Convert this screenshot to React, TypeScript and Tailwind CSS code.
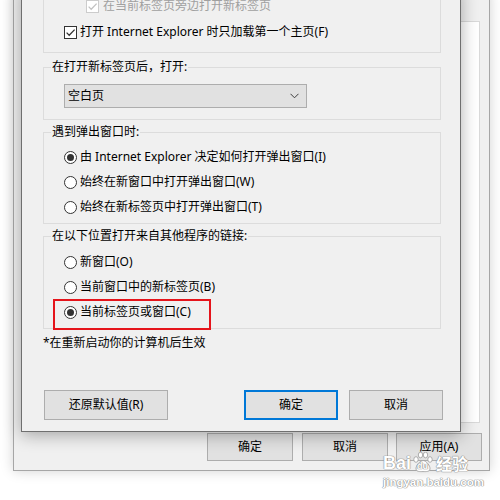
import React from "react";

function CheckBox({ disabled }: { disabled?: boolean }) {
  return (
    <span
      className={`flex h-[13px] w-[13px] shrink-0 items-center justify-center border bg-white ${
        disabled ? "border-[#cccccc]" : "border-[#333333]"
      }`}
    >
      <svg width="11" height="11" viewBox="0 0 11 11">
        <path
          d="M1.6 5.6 L4.2 8.2 L9.6 2.6"
          fill="none"
          stroke={disabled ? "#c2c2c2" : "#333333"}
          strokeWidth="1.3"
        />
      </svg>
    </span>
  );
}

function Radio({ checked }: { checked?: boolean }) {
  return (
    <span className="flex h-[13px] w-[13px] shrink-0 items-center justify-center rounded-full border border-[#333333] bg-white">
      {checked && <span className="h-[7px] w-[7px] rounded-full bg-[#333333]" />}
    </span>
  );
}

function RadioRow({ label, checked }: { label: string; checked?: boolean }) {
  return (
    <div className="flex h-[16px] items-center gap-[3px]">
      <Radio checked={checked} />
      <span>{label}</span>
    </div>
  );
}

function Group({ title, children, className }: { title: string; children: React.ReactNode; className?: string }) {
  return (
    <fieldset className={`border border-[#dcdcdc] pl-[7px] ${className ?? ""}`}>
      <legend className="px-[1px] leading-[16px]">{title}</legend>
      {children}
    </fieldset>
  );
}

function WinButton({ label, w, h, primary }: { label: string; w: string; h: string; primary?: boolean }) {
  return (
    <button
      className={`flex items-center justify-center bg-[#e1e1e1] ${w} ${h} ${
        primary ? "border-2 border-[#0078d7]" : "border border-[#adadad]"
      }`}
    >
      {label}
    </button>
  );
}

export default function App() {
  return (
    <div className="relative h-[500px] w-[500px] overflow-hidden bg-white font-['Noto_Sans','Noto_Sans_CJK_SC',sans-serif] text-[12px] leading-[16px] text-black">
      {/* Internet options window behind */}
      <div className="absolute left-[13px] top-[-10px] flex h-[481px] w-[477px] flex-col border border-[#a6a6a6] bg-[#f0f0f0] shadow-[0_0_12px_rgba(0,0,0,0.18)]">
        <div className="mx-[9px] mt-[30px] ml-[8px] flex-1 border border-[#d9d9d9] bg-white" />
        <div className="flex justify-end pb-[9px] pr-[7px] pt-[10px]">
          <div className="mr-[9px]">
            <WinButton label="确定" w="w-[86px]" h="h-[28px]" />
          </div>
          <div className="mr-[8px]">
            <WinButton label="取消" w="w-[86px]" h="h-[28px]" />
          </div>
          <WinButton label="应用(A)" w="w-[86px]" h="h-[28px]" />
        </div>
      </div>

      {/* Tab settings dialog */}
      <div className="absolute left-[21px] top-[-15px] w-[440px] border border-[#6f6f6f] bg-[#f0f0f0] shadow-[0_3px_16px_rgba(0,0,0,0.32)]">
        <div className="pl-[21px] pr-[19px]">
          <div className="border border-[#dcdcdc] pb-[12px] pl-[20px] pt-[11px]">
            <div className="ml-[22px] flex h-[16px] items-center gap-[4px] text-[#a0a0a0]">
              <CheckBox disabled />
              <span>在当前标签页旁边打开新标签页</span>
            </div>
            <div className="mt-[10px] flex h-[16px] items-center gap-[3px]">
              <CheckBox />
              <span>打开 Internet Explorer 时只加载第一个主页(F)</span>
            </div>
          </div>

          <Group title="在打开新标签页后，打开:" className="mt-[6px] pb-[11px] pt-[9px]">
            <div className="ml-[13px] flex h-[24px] w-[243px] items-center justify-between border border-[#adadad] bg-[#e1e1e1] pl-[3px] pr-[7px]">
              <span>空白页</span>
              <svg width="9" height="6" viewBox="0 0 9 6">
                <path d="M0.5 0.8 L4.5 4.8 L8.5 0.8" fill="none" stroke="#3c3c3c" strokeWidth="1" />
              </svg>
            </div>
          </Group>

          <Group title="遇到弹出窗口时:" className="mt-[4px] pb-[8px] pt-[9px]">
            <div className="ml-[13px] flex flex-col gap-[9px]">
              <RadioRow label="由 Internet Explorer 决定如何打开弹出窗口(I)" checked />
              <RadioRow label="始终在新窗口中打开弹出窗口(W)" />
              <RadioRow label="始终在新标签页中打开弹出窗口(T)" />
            </div>
          </Group>

          <Group title="在以下位置打开来自其他程序的链接:" className="mt-[4px] pb-[8px] pt-[10px]">
            <div className="ml-[13px] flex flex-col gap-[9px]">
              <RadioRow label="新窗口(O)" />
              <RadioRow label="当前窗口中的新标签页(B)" />
              <div className="relative">
                <RadioRow label="当前标签页或窗口(C)" checked />
                <div className="pointer-events-none absolute left-[-11px] top-[-5px] h-[31px] w-[158px] border-2 border-[#e5141b]" />
              </div>
            </div>
          </Group>

          <p className="mt-[6px] h-[16px]">*在重新启动你的计算机后生效</p>
        </div>

        <div className="mt-[39px] flex items-center justify-between pb-[11px] pl-[22px] pr-[17px]">
          <WinButton label="还原默认值(R)" w="w-[124px]" h="h-[30px]" />
          <div className="flex gap-[11px]">
            <WinButton label="确定" w="w-[94px]" h="h-[30px]" primary />
            <WinButton label="取消" w="w-[94px]" h="h-[30px]" />
          </div>
        </div>
      </div>

      {/* watermark */}
      <div className="pointer-events-none absolute left-[383px] top-[452px] font-['Liberation_Sans',sans-serif] text-white [text-shadow:0_0_1px_#8a8a8a,0_0_1px_#8a8a8a,0_0_1px_#8a8a8a]">
        <div className="flex h-[21px] items-end">
          <span className="text-[18px] font-bold leading-[20px]">Bai</span>
          <span className="relative ml-[1px] h-[21px] w-[22px]">
            <svg width="22" height="21" viewBox="0 0 22 21" className="absolute left-0 top-0">
              <g fill="#ffffff" stroke="#9a9a9a" strokeWidth="0.8">
                <ellipse cx="4" cy="7.5" rx="2.2" ry="2.8" />
                <ellipse cx="8.5" cy="3" rx="2.2" ry="2.8" />
                <ellipse cx="13.5" cy="3" rx="2.2" ry="2.8" />
                <ellipse cx="18" cy="7.5" rx="2.2" ry="2.8" />
                <path d="M11 8.5 C8 8.5 3.5 14 4 17 C4.5 20 8 19.6 11 19.6 C14 19.6 17.5 20 18 17 C18.5 14 14 8.5 11 8.5 Z" />
              </g>
            </svg>
            <span className="absolute left-[5px] top-[9px] text-[9px] font-bold leading-[10px]">du</span>
          </span>
          <span className="ml-[2px] font-['Noto_Sans_CJK_SC',sans-serif] text-[16px] font-bold leading-[20px]">经验</span>
        </div>
        <div className="mt-[3px] text-[11.5px] font-bold leading-[12px]">jingyan.baidu.com</div>
      </div>
    </div>
  );
}
